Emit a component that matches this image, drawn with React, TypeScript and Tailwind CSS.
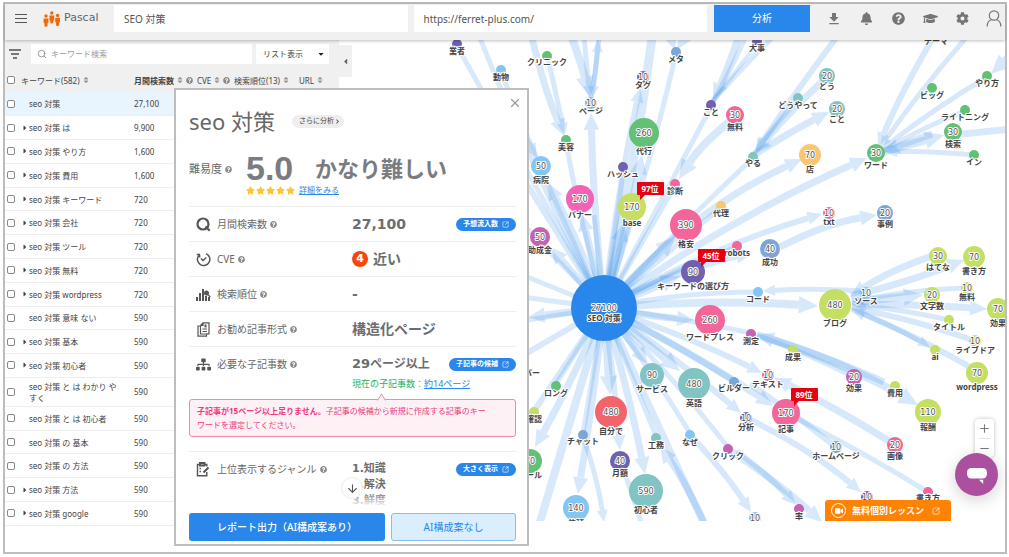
import React, { useState } from 'react';
import {
  FaBell,
  FaCaretDown,
  FaCaretLeft,
  FaCaretRight,
  FaChevronRight,
  FaCog,
  FaGraduationCap,
  FaQuestionCircle,
  FaSitemap,
  FaSort,
  FaStar,
  FaVideo,
} from 'react-icons/fa';
import { MdFileDownload } from 'react-icons/md';
import { ArrowDown, Minus, Plus, Search, SquareArrowOutUpRight, X } from 'lucide-react';

interface Keyword {
  text: string;
  volume: string;
  expandable?: boolean;
  wraps?: boolean;
}

const KEYWORDS: Keyword[] = [
  { text: 'seo 対策', volume: '27,100' },
  { text: 'seo 対策 は', volume: '9,900', expandable: true },
  { text: 'seo 対策 やり方', volume: '1,600', expandable: true },
  { text: 'seo 対策 費用', volume: '1,600', expandable: true },
  { text: 'seo 対策 キーワード', volume: '720', expandable: true },
  { text: 'seo 対策 会社', volume: '720', expandable: true },
  { text: 'seo 対策 ツール', volume: '720', expandable: true },
  { text: 'seo 対策 無料', volume: '720', expandable: true },
  { text: 'seo 対策 wordpress', volume: '720', expandable: true },
  { text: 'seo 対策 意味 ない', volume: '590' },
  { text: 'seo 対策 基本', volume: '590', expandable: true },
  { text: 'seo 対策 初心者', volume: '590', expandable: true },
  { text: 'seo 対策 と は わかり やすく', volume: '590', wraps: true },
  { text: 'seo 対策 と は 初心者', volume: '590' },
  { text: 'seo 対策 の 基本', volume: '590' },
  { text: 'seo 対策 の 方法', volume: '590' },
  { text: 'seo 対策 方法', volume: '590', expandable: true },
  { text: 'seo 対策 google', volume: '590', expandable: true },
];

const PURPLE = '#6f61b0';
const GREEN = '#63c175';
const SKY = '#83c5f3';
const TEAL = '#82c4c3';
const BLUE = '#7ba6d6';
const PINK = '#f4659a';
const ROSE = '#f362b4';
const LIME = '#c5df63';
const ORANGE = '#fbc571';
const MAGENTA = '#c463b1';
const RED = '#f1646c';

// label, x, y, radius, colour, distance to the label, search volume
type MapNode = [string, number, number, number, string, number, string?];

const NODES: MapNode[] = [
  ['業者', 457, 44, 5, PURPLE, 7],
  ['動物', 501, 70, 5, SKY, 7],
  ['クリニック', 547, 56, 5, GREEN, 6],
  ['ページ', 591, 103, 6, TEAL, 8, '10'],
  ['タグ', 643, 77, 6, PURPLE, 8, '10'],
  ['メタ', 676, 52, 5, BLUE, 7],
  ['大事', 757, 42, 5, PURPLE, 6],
  ['こと', 711, 105, 5, PURPLE, 7],
  ['無料', 735, 115, 9, PINK, 12, '30'],
  ['やる', 753, 157, 5, TEAL, 6],
  ['どうやって', 798, 98, 5, TEAL, 7],
  ['どう', 827, 76, 8, TEAL, 10, '20'],
  ['こと', 837, 109, 8, TEAL, 10, '20'],
  ['店', 810, 155, 11, ORANGE, 14, '70'],
  ['ワード', 876, 153, 9, GREEN, 12, '30'],
  ['検索', 953, 132, 9, GREEN, 12, '30'],
  ['ライトニング', 965, 110, 5, GREEN, 7],
  ['ビッグ', 932, 88, 5, GREEN, 7],
  ['やり方', 987, 76, 5, GREEN, 7],
  ['イン', 974, 155, 5, GREEN, 7],
  ['テーマ', 936, 35, 5, GREEN, 6],
  ['美容', 566, 140, 5, GREEN, 7],
  ['代行', 644, 133, 15, GREEN, 18, '260'],
  ['病院', 541, 166, 10, SKY, 14, '50'],
  ['ハッシュ', 623, 167, 5, PURPLE, 7],
  ['診断', 675, 184, 5, PINK, 7],
  ['バナー', 580, 199, 14, ROSE, 16, '170'],
  ['base', 632, 207, 14, LIME, 16, '170'],
  ['代理', 721, 206, 5, ORANGE, 7],
  ['格安', 686, 225, 16, PINK, 19, '390'],
  ['助成金', 540, 237, 10, MAGENTA, 13, '50'],
  ['robots', 737, 246, 5, PINK, 7],
  ['成功', 770, 249, 10, BLUE, 13, '40'],
  ['txt', 829, 213, 6, PINK, 9, '10'],
  ['事例', 885, 213, 8, BLUE, 11, '20'],
  ['キーワードの選び方', 693, 272, 12, PURPLE, 14, '90'],
  ['コード', 758, 292, 5, SKY, 7],
  ['ワードプレス', 710, 320, 15, PINK, 17, '260'],
  ['測定', 751, 334, 5, MAGENTA, 7],
  ['SEO 対策', 604, 308, 33, '#2986ea', 10, '27100'],
  ['ソース', 866, 293, 6, SKY, 8, '10'],
  ['ブログ', 835, 305, 16, LIME, 18, '480'],
  ['はてな', 938, 256, 9, LIME, 11, '30'],
  ['書き方', 974, 257, 11, LIME, 14, '70'],
  ['無料', 967, 288, 6, LIME, 9, '10'],
  ['文字数', 932, 295, 8, LIME, 11, '20'],
  ['効果', 998, 309, 11, LIME, 14, '70'],
  ['タイトル', 949, 320, 5, LIME, 7],
  ['ライブドア', 975, 341, 6, LIME, 9, '10'],
  ['ai', 935, 350, 5, LIME, 7],
  ['成果', 793, 350, 5, LIME, 7],
  ['wordpress', 977, 373, 11, LIME, 14, '70'],
  ['サービス', 652, 375, 12, TEAL, 14, '90'],
  ['英語', 694, 384, 16, TEAL, 19, '480'],
  ['ビルダー', 734, 382, 5, BLUE, 6],
  ['テキスト', 768, 375, 6, PINK, 9, '10'],
  ['効果', 854, 377, 8, MAGENTA, 11, '20'],
  ['費用', 895, 386, 5, LIME, 7],
  ['報酬', 928, 412, 13, LIME, 15, '110'],
  ['記事', 786, 413, 14, PINK, 16, '170'],
  ['ロング', 556, 386, 5, GREEN, 7],
  ['バー', 532, 366, 4, '#ffffff', 7],
  ['確認', 534, 412, 5, LIME, 7],
  ['自分で', 611, 412, 16, RED, 19, '480'],
  ['チャット', 583, 435, 5, BLUE, 6],
  ['工務', 656, 438, 5, TEAL, 7],
  ['なぜ', 690, 435, 5, SKY, 7],
  ['分析', 746, 418, 6, PURPLE, 9, '10'],
  ['クリック', 728, 449, 5, MAGENTA, 7],
  ['月額', 620, 461, 10, PURPLE, 12, '40'],
  ['初心者', 646, 491, 17, TEAL, 19, '590'],
  ['依頼', 576, 508, 13, SKY, 15, '140'],
  ['メール', 530, 461, 12, GREEN, 14, '70'],
  ['ホームページ', 836, 447, 6, BLUE, 9, '10'],
  ['画像', 895, 445, 8, PINK, 11, '20'],
  ['書き方', 928, 492, 5, PINK, 6],
  ['', 867, 497, 6, PURPLE, 9, '10'],
  ['率', 799, 509, 5, MAGENTA, 7],
  ['', 755, 518, 6, SKY, 9, '10'],
];

// x1, y1, x2, y2, width, bend (negative is left of travel), arrow head at the end
type MapEdge = [number, number, number, number, number, number, boolean];

const EDGES: MapEdge[] = [
  // from the centre, upwards
  [604, 308, 457, 46, 5, 0, false],
  [604, 308, 480, 38, 5, -8, false],
  [604, 308, 501, 72, 5, -4, false],
  [604, 308, 566, 142, 5, -4, false],
  [604, 308, 548, 183, 7, 4, true],
  [604, 308, 591, 113, 7, -4, true],
  [604, 308, 582, 214, 7, 0, true],
  [604, 308, 594, 215, 5, 0, false],
  [604, 308, 652, 38, 9, 6, false],
  [604, 308, 640, 88, 6, -6, true],
  [604, 308, 642, 155, 8, 4, true],
  [604, 308, 624, 222, 8, 0, true],
  [604, 308, 624, 168, 5, 0, false],
  [604, 308, 676, 54, 5, 6, false],
  [604, 308, 711, 107, 5, 0, false],
  [604, 308, 675, 186, 5, 0, false],
  [604, 308, 675, 237, 8, 0, true],
  [604, 308, 753, 158, 5, -4, false],
  [604, 308, 802, 159, 7, -26, true],
  [604, 308, 867, 158, 7, -16, true],
  [604, 308, 822, 214, 6, -14, true],
  [604, 308, 721, 207, 5, 0, false],
  [604, 308, 737, 247, 5, -6, false],
  [604, 308, 753, 252, 7, -10, true],
  [604, 308, 680, 276, 8, 0, true],
  [604, 308, 757, 292, 5, -8, false],
  [604, 308, 818, 306, 8, -8, true],
  [604, 308, 694, 320, 7, 2, true],
  [604, 308, 751, 333, 5, -3, false],
  // from the centre, downwards
  [604, 308, 762, 373, 6, -6, true],
  [604, 308, 734, 381, 6, -4, false],
  [604, 308, 773, 406, 7, -6, true],
  [604, 308, 741, 413, 6, -4, true],
  [604, 308, 680, 371, 8, 0, true],
  [604, 308, 648, 364, 7, 0, true],
  [604, 308, 728, 447, 5, -6, false],
  [604, 308, 690, 433, 5, -4, false],
  [604, 308, 656, 436, 5, 0, false],
  [604, 308, 704, 524, 7, 0, false],
  [604, 308, 645, 474, 7, -4, true],
  [604, 308, 620, 450, 6, -2, true],
  [604, 308, 610, 395, 8, 0, true],
  [604, 308, 583, 433, 5, 0, false],
  [604, 308, 578, 494, 7, -2, true],
  [604, 308, 540, 522, 8, 0, false],
  [604, 308, 556, 384, 5, 0, false],
  [604, 308, 534, 411, 6, 0, false],
  [604, 308, 535, 447, 7, -4, true],
  // towards the left
  [604, 308, 550, 247, 7, 0, true],
  [604, 308, 515, 165, 6, 0, false],
  [604, 308, 515, 216, 5, 0, false],
  [604, 308, 515, 272, 5, 0, false],
  [604, 308, 515, 296, 5, 0, false],
  [604, 308, 528, 317, 7, 0, true],
  [604, 308, 515, 322, 5, 0, false],
  [604, 308, 515, 360, 6, 0, false],
  // outer branches
  [532, 38, 564, 136, 7, 4, true],
  [548, 58, 565, 135, 5, 0, true],
  [572, 38, 589, 96, 8, -2, true],
  [584, 38, 590, 98, 5, 0, true],
  [599, 38, 592, 98, 5, 0, true],
  [591, 98, 598, 40, 5, 2, true],
  [515, 120, 537, 158, 6, 0, true],
  [671, 38, 675, 50, 8, 0, true],
  [684, 38, 677, 50, 8, 0, true],
  [738, 38, 713, 100, 7, -2, true],
  [745, 38, 713, 101, 5, -2, false],
  [772, 38, 713, 101, 5, 2, false],
  [757, 44, 712, 102, 4, 0, false],
  [730, 121, 679, 179, 8, 6, true],
  [836, 38, 755, 153, 6, 2, true],
  [826, 78, 755, 154, 7, 4, true],
  [798, 99, 754, 154, 5, 2, false],
  [754, 155, 829, 112, 7, -2, true],
  [933, 38, 878, 147, 6, 4, true],
  [966, 38, 880, 148, 5, 4, true],
  [987, 77, 881, 150, 5, 4, true],
  [1012, 54, 991, 74, 8, 0, true],
  [965, 111, 883, 151, 5, 4, false],
  [932, 134, 882, 152, 7, 0, true],
  [883, 152, 944, 135, 8, 0, true],
  [974, 155, 885, 152, 5, 3, true],
  [962, 134, 1012, 129, 7, 0, false],
  [780, 247, 877, 215, 7, -8, true],
  [932, 256, 850, 297, 7, 6, true],
  [851, 296, 964, 260, 7, 4, true],
  [862, 291, 763, 291, 5, 3, true],
  [967, 288, 852, 302, 5, 5, true],
  [852, 302, 923, 295, 8, 0, true],
  [852, 304, 987, 309, 7, -2, true],
  [949, 320, 852, 305, 5, 3, true],
  [975, 341, 851, 308, 6, 5, true],
  [851, 309, 930, 347, 5, -3, true],
  [970, 367, 851, 309, 6, 4, true],
  [884, 382, 757, 335, 7, 4, true],
  [757, 335, 918, 405, 8, -10, true],
  [854, 377, 757, 335, 5, 3, false],
  [895, 445, 774, 378, 7, 4, true],
  [836, 447, 750, 384, 6, 2, false],
  [928, 492, 796, 418, 5, 3, false],
  [749, 419, 861, 492, 6, -8, true],
  [737, 451, 796, 505, 6, -3, true],
  [730, 450, 822, 522, 7, -4, true],
  [583, 436, 604, 522, 5, -4, true],
  [692, 437, 751, 512, 6, -4, true],
  [705, 524, 660, 446, 7, 4, true],
  [624, 470, 641, 522, 5, 0, false],
];

interface EdgeProps {
  edge: MapEdge;
}

function Edge({ edge }: EdgeProps) {
  const [x1, y1, x2, y2, width, bend, arrow] = edge;
  const length = Math.hypot(x2 - x1, y2 - y1);
  const cx = (x1 + x2) / 2 - ((y2 - y1) / length) * bend;
  const cy = (y1 + y2) / 2 + ((x2 - x1) / length) * bend;
  const run = Math.hypot(x2 - cx, y2 - cy);
  const ux = (x2 - cx) / run;
  const uy = (y2 - cy) / run;
  const head = arrow ? width * 2.4 : 0;
  const half = width * 1.1;
  const bx = x2 - ux * head;
  const by = y2 - uy * head;

  return (
    <g opacity="0.18" fill="#2986ea" stroke="none">
      <path d={`M${x1} ${y1}Q${cx} ${cy} ${bx} ${by}`} fill="none" stroke="#2986ea" strokeWidth={width} />
      {arrow && (
        <path d={`M${x2} ${y2}L${bx - uy * half} ${by + ux * half}L${bx + uy * half} ${by - ux * half}Z`} />
      )}
    </g>
  );
}

interface RankProps {
  x: number;
  y: number;
  text: string;
}

function RankFlag({ x, y, text }: RankProps) {
  return (
    <g>
      <path d={`M${x} ${y}h25q1 0 1 1v11q0 1 -1 1h-18l-5 5v-5h-2q-1 0 -1 -1v-11q0 -1 1 -1z`} fill="#e60012" />
      <text x={x + 12} y={y + 10} textAnchor="middle" fill="#fff" fontSize="8" fontWeight="700">
        {text}
      </text>
    </g>
  );
}

function KeywordMap() {
  return (
    <svg
      className="block h-[481px] w-[666px] max-w-none"
      viewBox="339 40 666 481"
      role="img"
      aria-label="キーワードマップ"
    >
      {EDGES.map((edge, i) => (
        <Edge key={i} edge={edge} />
      ))}
      {NODES.map(([label, x, y, r, color, drop, volume], i) => (
        <g key={i} textAnchor="middle" fontSize="8" stroke="#fff" strokeWidth="2" paintOrder="stroke" strokeLinejoin="round">
          <circle cx={x} cy={y} r={r} fill={color} stroke="none" />
          {volume && (
            <text x={x} y={y + 3} fill="#555" fontFamily="'DejaVu Sans', sans-serif">
              {volume}
            </text>
          )}
          {label && (
            <text x={x} y={y + drop + 3} fill="#444" fontWeight="700">
              {label}
            </text>
          )}
        </g>
      ))}
      <RankFlag x={638} y={182} text="97位" />
      <RankFlag x={699} y={249} text="45位" />
      <RankFlag x={792} y={388} text="89位" />
    </svg>
  );
}

function Help() {
  return <FaQuestionCircle size={7} className="shrink-0 text-[#8a8a8a]" />;
}

function PascalLogo() {
  return (
    <svg width="18" height="16" viewBox="0 0 18 16" fill="#ee6a0b" aria-hidden="true">
      <circle cx="3" cy="5" r="1.7" />
      <path d="M.6 7.4h4.8v4.4h-.8v2.400a1.600 1.600 0 0 1-3.200 0v-2.400H.6z" />
      <circle cx="8.800" cy="2" r="1.700" />
      <path d="M6.400 4.400h4.800v5h-.8v1.600a1.600 1.600 0 0 1-3.200 0V9.400h-.8z" />
      <circle cx="14.600" cy="4.400" r="1.700" />
      <path d="M12.200 6.800H17v4.400h-.8v2.200a1.600 1.600 0 0 1-3.200 0v-2.200h-.8z" />
    </svg>
  );
}

function Header() {
  const iconButton = 'flex w-5 items-center justify-center';

  return (
    <header className="relative z-10 flex h-9 items-start bg-[#f0f0f0] pt-px shadow-[0_1px_3px_rgba(0,0,0,0.25)]">
      <div className="flex h-[27px] w-[109px] shrink-0 items-center pl-[10px]">
        <button type="button" aria-label="メニュー" className="mr-4 flex w-3 flex-col gap-[3px]">
          <span className="h-px bg-[#555]" />
          <span className="h-px bg-[#555]" />
          <span className="h-px bg-[#555]" />
        </button>
        <PascalLogo />
        <span className="ml-[3px] font-['DejaVu_Sans',sans-serif] text-[11px] text-[#666]">Pascal</span>
      </div>
      <input
        aria-label="キーワード"
        defaultValue="SEO 対策"
        className="h-[27px] min-w-0 flex-1 bg-white px-[10px] text-[10px] text-[#555] outline-none"
      />
      <input
        aria-label="URL"
        defaultValue="https://ferret-plus.com/"
        className="ml-[6px] h-[27px] min-w-0 flex-1 bg-white px-[10px] text-[10px] text-[#555] outline-none"
      />
      <button type="button" className="ml-[7px] h-[27px] w-24 shrink-0 bg-[#2986ea] text-[10px] text-white">
        分析
      </button>
      <nav className="ml-[14px] flex h-[27px] shrink-0 items-center gap-3 pr-px text-[#757575]">
        <button type="button" aria-label="ダウンロード" className={iconButton}>
          <MdFileDownload size={16} />
        </button>
        <button type="button" aria-label="お知らせ" className={iconButton}>
          <FaBell size={13} />
        </button>
        <button type="button" aria-label="ヘルプ" className={iconButton}>
          <FaQuestionCircle size={13} />
        </button>
        <button type="button" aria-label="学習" className={iconButton}>
          <FaGraduationCap size={15} />
        </button>
        <button type="button" aria-label="設定" className={iconButton}>
          <FaCog size={13} />
        </button>
        <button type="button" aria-label="アカウント" className={iconButton}>
          <svg width="16" height="17" viewBox="0 0 16 17" fill="none" stroke="currentColor" strokeWidth="1.2">
            <circle cx="8" cy="5.500" r="4.700" />
            <path d="M1.200 16.500c0-4.500 2.500-6.500 4.800-7M14.800 16.500c0-4.500-2.500-6.500-4.800-7" />
          </svg>
        </button>
      </nav>
    </header>
  );
}

function Checkbox({ label }: { label: string }) {
  return (
    <input
      type="checkbox"
      aria-label={label}
      className="block size-2 appearance-none rounded-[2px] border border-[#888] bg-white checked:bg-[#2986ea]"
    />
  );
}

function KeywordPanel() {
  const [query, setQuery] = useState('');
  const heading = 'p-0 text-left font-normal whitespace-nowrap';
  const headingInner = 'flex items-center gap-[2px]';

  return (
    <section className="relative w-[334px] shrink-0">
      <div className="flex h-7 items-center bg-[#f0f0f0] pl-1">
        <button type="button" aria-label="絞り込み" className="mr-[10px] flex w-3 flex-col items-center gap-[2px]">
          <span className="h-[2px] w-3 bg-[#777]" />
          <span className="h-[2px] w-2 bg-[#777]" />
          <span className="h-[2px] w-1 bg-[#777]" />
        </button>
        <label className="flex h-5 w-[221px] items-center gap-1 bg-white pl-[6px]">
          <Search size={10} className="text-[#888]" />
          <input
            value={query}
            onChange={(e) => setQuery(e.target.value)}
            aria-label="キーワード検索"
            placeholder="キーワード検索"
            className="min-w-0 flex-1 text-[8px] outline-none placeholder:text-[#999]"
          />
        </label>
        <div className="relative ml-1 w-[73px]">
          <select
            aria-label="表示形式"
            className="block h-5 w-full appearance-none bg-white pl-[7px] text-[8px] text-[#444]"
          >
            <option>リスト表示</option>
          </select>
          <FaCaretDown size={8} className="pointer-events-none absolute top-[6px] right-1 text-[#222]" />
        </div>
      </div>

      <table className="w-full table-fixed border-collapse bg-[#f0f0f0] text-[8px] leading-[11px] text-[#444]">
        <colgroup>
          <col className="w-4" />
          <col className="w-[113px]" />
          <col className="w-[63px]" />
          <col className="w-[37px]" />
          <col className="w-[65px]" />
          <col />
        </colgroup>
        <thead>
          <tr className="h-6">
            <th className="p-0 pl-[2px]">
              <Checkbox label="すべて選択" />
            </th>
            <th className={heading}>
              <span className={headingInner}>
                キーワード(582) <FaSort size={8} className="text-[#999]" />
              </span>
            </th>
            <th className={heading}>
              <span className={headingInner}>
                <b>月間検索数</b>
                <FaSort size={8} className="text-[#999]" />
                <Help />
              </span>
            </th>
            <th className={heading}>
              <span className={headingInner}>
                CVE
                <FaSort size={8} className="text-[#999]" />
                <Help />
              </span>
            </th>
            <th className={heading}>
              <span className={headingInner}>
                検索順位(13) <FaSort size={8} className="text-[#999]" />
              </span>
            </th>
            <th className={heading}>
              <span className={headingInner}>
                URL <FaSort size={8} className="text-[#999]" />
              </span>
            </th>
          </tr>
        </thead>
      </table>
      <table className="h-[434px] w-full table-fixed border-collapse text-[8px] leading-[11px] text-[#444]">
        <colgroup>
          <col className="w-4" />
          <col className="w-[113px]" />
          <col />
        </colgroup>
        <tbody>
          {KEYWORDS.map((keyword, i) => (
            <tr
              key={keyword.text}
              className={`border-b border-[#eee] ${keyword.wraps ? 'h-7' : 'h-[23px]'} ${
                i === 0 ? 'bg-[#e8f5fe]' : 'bg-white'
              }`}
            >
              <td className="p-0 pl-[2px]">
                <Checkbox label={keyword.text} />
              </td>
              <td className="p-0">
                <div className="flex items-center">
                  <span className="w-2 shrink-0">
                    {keyword.expandable && <FaCaretRight size={8} className="text-[#444]" />}
                  </span>
                  <span className="w-[94px]">{keyword.text}</span>
                </div>
              </td>
              <td className="p-0">{keyword.volume}</td>
            </tr>
          ))}
        </tbody>
      </table>

      <button
        type="button"
        aria-label="パネルを閉じる"
        className="absolute top-[5px] -right-[13px] flex h-8 w-[13px] items-center justify-center bg-[#f0f0f0] text-[#666]"
      >
        <FaCaretLeft size={9} />
      </button>
    </section>
  );
}

interface MetricRowProps {
  icon: React.ReactNode;
  label: string;
  children: React.ReactNode;
  action?: string;
}

function MetricRow({ icon, label, children, action }: MetricRowProps) {
  return (
    <div className="flex h-[35px] items-center border-t border-[#eee]">
      <span className="flex w-7 shrink-0 justify-center text-[#555]">{icon}</span>
      <span className="flex w-[135px] shrink-0 items-center gap-[3px] text-[10px] whitespace-nowrap text-[#666]">
        {label}
        <Help />
      </span>
      <span className="flex flex-1 items-center font-['DejaVu_Sans','Noto_Sans_CJK_JP',sans-serif] text-[14px] font-bold whitespace-nowrap text-[#6b6d70]">
        {children}
      </span>
      {action && (
        <button
          type="button"
          className="flex h-[13px] shrink-0 items-center gap-1 rounded-full bg-[#2986ea] px-[7px] text-[7px] font-bold whitespace-nowrap text-white"
        >
          {action}
          <SquareArrowOutUpRight size={7} />
        </button>
      )}
    </div>
  );
}

function DetailDialog() {
  return (
    <div
      role="dialog"
      aria-label="seo 対策"
      className="absolute top-[84px] left-[169px] z-20 w-[355px] border-2 border-[#bdbdbd] bg-white pr-[11px] pb-[3px] pl-[13px]"
    >
      <button type="button" aria-label="閉じる" className="absolute top-[6px] right-[5px] text-[#999]">
        <X size={14} />
      </button>

      <div className="flex h-[62px] items-center gap-[17px]">
        <h1 className="text-[22px] text-[#666]">seo 対策</h1>
        <a href="#more" className="flex h-[13px] items-center rounded-full bg-[#eee] pr-1 pl-[7px] text-[7px] text-[#444]">
          さらに分析
          <FaChevronRight size={5} className="ml-px" />
        </a>
      </div>

      <div className="flex h-[54px] items-start">
        <span className="flex w-[57px] items-center gap-[3px] pt-[9px] text-[11px] text-[#666]">
          難易度 <Help />
        </span>
        <div>
          <div className="flex h-8 items-center">
            <span className="w-[69px] font-['Liberation_Sans',sans-serif] text-[34px] font-bold text-[#7b7c80]">
              5.0
            </span>
            <span className="text-[22px] font-bold text-[#7b7c80]">かなり難しい</span>
          </div>
          <div className="flex items-center">
            <span className="flex gap-px text-[#fdc62e]">
              <FaStar size={9} />
              <FaStar size={9} />
              <FaStar size={9} />
              <FaStar size={9} />
              <FaStar size={9} />
            </span>
            <a href="#detail" className="ml-1 text-[8px] leading-3 text-[#2986ea] underline">
              詳細をみる
            </a>
          </div>
        </div>
      </div>

      <MetricRow
        icon={
          <svg width="15" height="15" viewBox="0 0 15 15" fill="none" stroke="currentColor" strokeWidth="2.200">
            <circle cx="7" cy="7" r="5.500" />
            <path d="M9.500 9.500l4.200 4.200" />
          </svg>
        }
        label="月間検索数"
        action="予想流入数"
      >
        27,100
      </MetricRow>
      <MetricRow
        icon={
          <svg width="15" height="15" viewBox="0 0 15 15" fill="none" stroke="currentColor" strokeWidth="1.500">
            <path d="M10 1.600a6.200 6.200 0 1 1-7.300 2M.8 2.600l2.600-.1.400 3M5 6.500l2 2 3.300-3" />
          </svg>
        }
        label="CVE"
      >
        <span className="mr-[5px] flex size-4 items-center justify-center rounded-full bg-[#f4470f] text-[11px] text-white">
          4
        </span>
        近い
      </MetricRow>
      <MetricRow
        icon={
          <svg width="15" height="13" viewBox="0 0 15 13" fill="currentColor">
            <path d="M0 9h2v4H0zM3 5h2v8H3zM6 1h2v12H6zM9 8h2v5H9zM12 9h2v4h-2z" />
            <path d="M10.500 2.500a2.500 2.500 0 1 1 0 5 2.500 2.500 0 0 1 0-5zM12 6l2.800 2.500-.8.900-2.800-2.500z" />
          </svg>
        }
        label="検索順位"
      >
        -
      </MetricRow>
      <MetricRow
        icon={
          <svg width="13" height="15" viewBox="0 0 13 15" fill="none" stroke="currentColor" strokeWidth="1.200">
            <path d="M3.500 3.500L6 .8h6v11H9.500M3.500 3.500V12h6M3.500 4H1v10.200h8.500V12M6 .8v2.700H3.500M5.500 7h4.500M5.500 9.500h4.500" />
            <path d="M8.500 2.500v3" strokeWidth="2" />
          </svg>
        }
        label="お勧め記事形式"
      >
        構造化ページ
      </MetricRow>
      <MetricRow icon={<FaSitemap size={15} />} label="必要な子記事数" action="子記事の候補">
        <span className="text-[13px]">29</span>
        <span className="text-[12px]">ページ以上</span>
      </MetricRow>

      <p className="-mt-[3px] ml-[163px] text-[9px] leading-3 whitespace-nowrap text-[#19b25c]">
        現在の子記事数：
        <a href="#articles" className="text-[#2986ea] underline">
          約14ページ
        </a>
      </p>
      <div className="relative mt-[9px] rounded-[3px] border border-[#f288ad] bg-[#fef1f6] py-1 pr-6 pl-[7px] text-[8px] leading-[14px] text-[#ee3a7b]">
        <svg className="absolute -top-[7px] left-[187px]" width="9" height="8" viewBox="0 0 9 8">
          <path d="M.5 7.500L4.500 1l4 6.500" fill="#fef1f6" stroke="#f288ad" />
        </svg>
        <b>子記事が15ページ以上足りません。</b>子記事の候補から新規に作成する記事のキーワードを選定してください。
      </div>

      <div className="relative mt-[14px] h-14 overflow-hidden">
        <MetricRow
          icon={
            <svg width="14" height="15" viewBox="0 0 14 15" fill="none" stroke="currentColor" strokeWidth="1.400">
              <path d="M9 13.800H1.500V2.500H4M8.500 2.500h2.300v2M10.800 10v3.800H8M3.500 6.500H5M3.500 9.500H5" />
              <path d="M4 1h4.500v2.500H4zM12.500 5.500l-5 5" strokeWidth="2" />
            </svg>
          }
          label="上位表示するジャンル"
          action="大きく表示"
        >
          <span className="text-[11px]">1.知識</span>
        </MetricRow>
        <ol className="-mt-[9px] ml-[163px] font-['DejaVu_Sans','Noto_Sans_CJK_JP',sans-serif] text-[11px] leading-4 font-bold text-[#6b6d70]">
          <li>2.解決</li>
          <li>3.鮮度</li>
        </ol>
        <div className="absolute inset-x-0 bottom-0 h-4 bg-gradient-to-b from-transparent to-white" />
        <button
          type="button"
          aria-label="下へスクロール"
          className="absolute top-[26px] left-[152px] flex size-[22px] items-center justify-center rounded-full border border-[#eee] bg-white text-[#555]"
        >
          <ArrowDown size={13} />
        </button>
      </div>

      <div className="mt-[6px] flex gap-[6px] text-[10px]">
        <button type="button" className="h-7 w-[196px] rounded-[3px] bg-[#2986ea] font-medium text-white">
          レポート出力（AI構成案あり）
        </button>
        <button type="button" className="h-7 flex-1 rounded-[3px] border border-[#8bbdf0] bg-[#daeefe] text-[#2986ea]">
          AI構成案なし
        </button>
      </div>
    </div>
  );
}

export default function App() {
  return (
    <div className="bg-white pt-[2px] pr-[2px] pb-[3px] pl-[3px] font-['Noto_Sans','Noto_Sans_CJK_JP',sans-serif]" lang="ja">
      <div className="relative border-2 border-[#bdbdbd]">
        <Header />
        <main className="flex pb-[26px]">
          <KeywordPanel />
          <div className="relative h-[481px] min-w-0 flex-1">
            <div className="h-full overflow-hidden">
              <KeywordMap />
            </div>
            <div className="absolute right-[11px] bottom-16 flex w-[19px] flex-col items-center rounded-[4px] bg-white text-[#777] shadow-[0_0_4px_rgba(0,0,0,0.25)]">
              <button type="button" aria-label="拡大" className="flex h-[19px] items-center">
                <Plus size={13} />
              </button>
              <span className="h-px w-3 bg-[#e5e5e5]" />
              <button type="button" aria-label="縮小" className="flex h-[18px] items-center">
                <Minus size={13} />
              </button>
            </div>
            <button
              type="button"
              aria-label="チャット"
              className="absolute right-[7px] bottom-[25px] flex size-[43px] items-center justify-center rounded-full bg-[#ac4f9f] shadow-[0_4px_16px_rgba(0,0,0,0.18)]"
            >
              <svg width="22" height="18" viewBox="0 0 22 18" fill="#fff">
                <rect x="1" y="2" width="20" height="10.500" rx="4.500" />
                <path d="M13 13.800h4.200V18z" />
              </svg>
            </button>
            <a
              href="#lesson"
              className="absolute right-[54px] bottom-0 flex h-[21px] w-[126px] items-center rounded-t-[3px] bg-[#ff8200] pl-[6px] text-[9px] font-bold whitespace-nowrap text-white"
            >
              <span className="mr-[6px] flex size-[15px] items-center justify-center rounded-full border border-white">
                <FaVideo size={8} />
              </span>
              無料個別レッスン
              <SquareArrowOutUpRight size={8} className="ml-2" />
            </a>
          </div>
        </main>
        <DetailDialog />
      </div>
    </div>
  );
}
